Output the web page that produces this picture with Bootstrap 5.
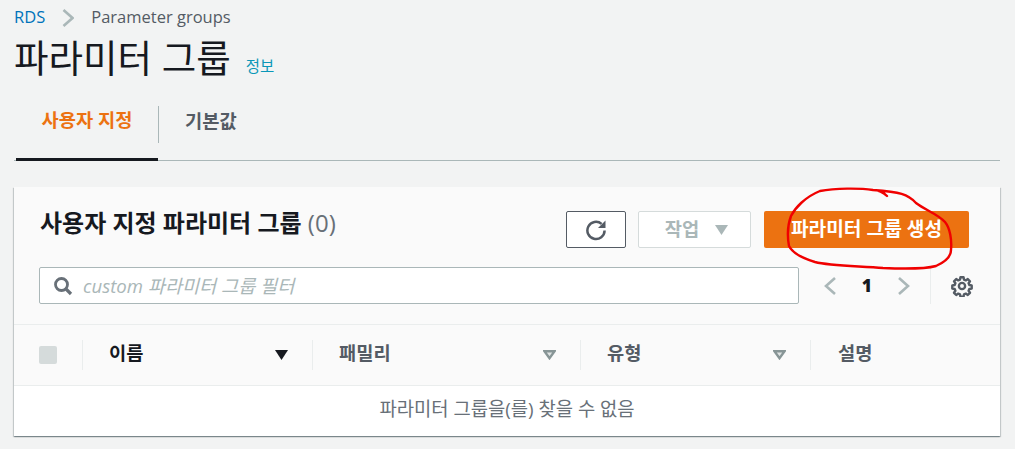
<!DOCTYPE html>
<html lang="ko">
<head>
  <meta charset="UTF-8">
  <meta name="viewport" content="width=device-width, initial-scale=1.0">
  <title>파라미터 그룹</title>
  <link href="https://cdn.jsdelivr.net/npm/bootstrap@5.3.2/dist/css/bootstrap.min.css" rel="stylesheet">
  <style>
    html, body { height: 449px; overflow: hidden; }
    body {
      background: #f2f3f3;
      color: #16191f;
      font-family: "Open Sans", "Noto Sans CJK KR", sans-serif;
      font-size: 14px;
      position: relative;
    }
    .page-wrap { padding: 6px 15px 0 14px; }
    .crumbs { height: 23px; font-size: 16.5px; color: #545b64; gap: 17px; }
    .crumbs a { color: #0073bb; text-decoration: none; }
    .page-title { font-size: 37.5px; font-weight: 400; line-height: 50px; margin: 0; }
    .info-link { color: #0a97b8; font-size: 15.5px; margin-left: 15px; text-decoration: none; position: relative; top: 9px; }
    .tab-row { margin-top: 15px; height: 63px; border-bottom: 1px solid #aab7b8; }
    .tab-item { font-size: 18.7px; font-weight: 700; color: #545b64; height: 63px; padding: 0 26px 17px; display: flex; align-items: center; }
    .tab-on { color: #ec7211; width: 142px; margin-left: 2px; border-bottom: 3px solid #16191f; justify-content: center; padding: 0 0 16px; }
    .tab-sep { width: 1px; height: 37px; background: #aab7b8; margin-top: 8px; }
    .panel-box { margin-top: 26px; background: #fff; box-shadow: 0 1px 1px 0 rgba(0,28,36,.3), 1px 1px 1px 0 rgba(0,28,36,.15), -1px 1px 1px 0 rgba(0,28,36,.15); }
    .panel-top { background: #fafafa; padding: 24px 31px 20px 25px; height: 138px; border-bottom: 1px solid #eaeded; }
    .panel-title { font-size: 24px; font-weight: 700; line-height: 24px; margin: 0 0 0 1px; }
    .panel-title span { font-weight: 400; color: #687078; }
    .aws-btn { height: 37px; border-radius: 2px; display: flex; align-items: center; justify-content: center; }
    .btn-refresh { width: 60px; border: 1px solid #545b64; background: #fff; }
    .btn-action { width: 113px; margin-left: 12px; padding-left: 4px; border: 1px solid #d5dbdb; background: #fff; color: #aab7b8; font-size: 18.7px; font-weight: 700; gap: 16px; }
    .btn-create { width: 205px; margin-left: 13px; background: #ec7211; color: #fff; font-size: 19.2px; font-weight: 700; }
    .filter-row { margin-top: 19px; height: 37px; }
    .filter-box { width: 760px; height: 37px; flex: none; border: 1px solid #aab7b8; border-radius: 2px; background: #fff; padding-left: 13px; gap: 10px; font-size: 18.6px; font-style: italic; color: #aab7b8; }
    .pager { width: 132px; flex: none; padding-left: 24px; color: #16191f; font-weight: 700; font-size: 17.5px; }
    .pager b { width: 60px; text-align: center; }
    .pager-sep { width: 1px; height: 37px; background: #eaeded; margin-left: 19px; }
    .gear-cell { margin-left: 20px; }
    .head-row { height: 61px; background: #fafafa; border-bottom: 1px solid #eaeded; font-size: 18.7px; font-weight: 700; color: #545b64; }
    .head-cell { height: 30px; border-right: 1px solid #eaeded; padding: 0 24px 0 26px; }
    .head-label { position: relative; top: -2px; }
    .cell-check { width: 69px; padding-left: 25px; }
    .check-box { width: 18px; height: 18px; background: #d5dbdb; border-radius: 2px; }
    .cell-name { width: 230px; color: #16191f; }
    .cell-family { width: 268px; }
    .cell-type { width: 230px; }
    .cell-desc { padding-left: 27px; }
    .empty-note { height: 50px; padding-bottom: 4px; font-size: 18.8px; color: #687078; }
    .red-scribble { position: absolute; left: 0; top: 0; pointer-events: none; }
  </style>
</head>
<body>
  <div class="page-wrap">
    <div class="crumbs d-flex align-items-center">
      <a href="#">RDS</a>
      <svg width="12" height="18" viewBox="0 0 12 18"><path d="M1.5 1l9 8-9 8" fill="none" stroke="#aab7b8" stroke-width="2.6"/></svg>
      <span>Parameter groups</span>
    </div>
    <div class="d-flex align-items-center mt-1">
      <h1 class="page-title">파라미터 그룹</h1>
      <a class="info-link" href="#">정보</a>
    </div>
    <div class="tab-row d-flex">
      <div class="tab-item tab-on">사용자 지정</div>
      <div class="tab-sep"></div>
      <div class="tab-item">기본값</div>
    </div>

    <div class="panel-box">
      <div class="panel-top">
        <div class="d-flex justify-content-between">
          <h2 class="panel-title">사용자 지정 파라미터 그룹 <span>(0)</span></h2>
          <div class="d-flex">
            <div class="aws-btn btn-refresh">
              <svg width="22" height="22" viewBox="0 0 22 22"><path d="M19.6 11.5a8.6 8.6 0 1 1-3-6.6" fill="none" stroke="#545b64" stroke-width="2.5"/><path d="M20.5 1.5v7.5h-7.5z" fill="#545b64"/></svg>
            </div>
            <div class="aws-btn btn-action">작업
              <svg width="13" height="10" viewBox="0 0 13 10"><path d="M0 0h13L6.5 10z" fill="#aab7b8"/></svg>
            </div>
            <div class="aws-btn btn-create">파라미터 그룹 생성</div>
          </div>
        </div>
        <div class="filter-row d-flex align-items-center">
          <div class="filter-box d-flex align-items-center">
            <svg width="20" height="20" viewBox="0 0 20 20"><circle cx="8.5" cy="8.5" r="6" fill="none" stroke="#687078" stroke-width="2.8"/><path d="M13 13l5 5" stroke="#687078" stroke-width="3.2"/></svg>
            <span>custom 파라미터 그룹 필터</span>
          </div>
          <div class="pager d-flex align-items-center">
            <svg width="14" height="20" viewBox="0 0 14 20"><path d="M12 2L3 10l9 8" fill="none" stroke="#aab7b8" stroke-width="2.6"/></svg>
            <b>1</b>
            <svg width="14" height="20" viewBox="0 0 14 20"><path d="M2 2l9 8-9 8" fill="none" stroke="#aab7b8" stroke-width="2.6"/></svg>
            <div class="pager-sep"></div>
          </div>
          <div class="gear-cell d-flex">
            <svg width="22" height="22" viewBox="0 0 24 24"><circle cx="12" cy="12" r="3.4" fill="none" stroke="#545b64" stroke-width="2.6"/><path d="M10.3 2.5h3.4l.5 2.6 1.9.8 2.2-1.5 2.4 2.4-1.5 2.2.8 1.9 2.6.5v3.4l-2.6.5-.8 1.9 1.5 2.2-2.4 2.4-2.2-1.5-1.9.8-.5 2.6h-3.4l-.5-2.6-1.9-.8-2.2 1.5-2.4-2.4 1.5-2.2-.8-1.9-2.6-.5v-3.4l2.6-.5.8-1.9-1.5-2.2 2.4-2.4 2.2 1.5 1.9-.8z" fill="none" stroke="#545b64" stroke-width="2.6" stroke-linejoin="round"/></svg>
          </div>
        </div>
      </div>

      <div class="head-row d-flex align-items-center">
        <div class="head-cell cell-check d-flex align-items-center"><div class="check-box"></div></div>
        <div class="head-cell cell-name d-flex align-items-center justify-content-between">
          <span class="head-label">이름</span>
          <svg width="13" height="10" viewBox="0 0 13 10"><path d="M0 0h13L6.5 10z" fill="#16191f"/></svg>
        </div>
        <div class="head-cell cell-family d-flex align-items-center justify-content-between">
          <span class="head-label">패밀리</span>
          <svg width="13" height="10" viewBox="0 0 13 10"><path d="M1.4 1.2h10.2L6.5 8.2z" fill="#dfe3e3" stroke="#879596" stroke-width="2.4"/></svg>
        </div>
        <div class="head-cell cell-type d-flex align-items-center justify-content-between">
          <span class="head-label">유형</span>
          <svg width="13" height="10" viewBox="0 0 13 10"><path d="M1.4 1.2h10.2L6.5 8.2z" fill="#dfe3e3" stroke="#879596" stroke-width="2.4"/></svg>
        </div>
        <div class="head-label cell-desc">설명</div>
      </div>
      <div class="empty-note d-flex align-items-center justify-content-center">파라미터 그룹을(를) 찾을 수 없음</div>
    </div>
  </div>

  <svg class="red-scribble" width="1015" height="449" viewBox="0 0 1015 449">
    <path d="M887 196 C882 191 878 190 873 190 C860 188 835 188 820 191 C805 197 795 208 791 216 C788 224 787 235 789 246 C793 254 805 259 815 262 C830 266 860 266 883 268 C905 269 925 269 936 266 C945 262 951 257 951 250 C952 240 950 228 945 222 C938 214 925 210 916 203 C908 194 900 192 873 190" fill="none" stroke="#f00000" stroke-width="2.4" stroke-linecap="round"/>
  </svg>
  <script src="https://cdn.jsdelivr.net/npm/bootstrap@5.3.2/dist/js/bootstrap.bundle.min.js"></script>
</body>
</html>
